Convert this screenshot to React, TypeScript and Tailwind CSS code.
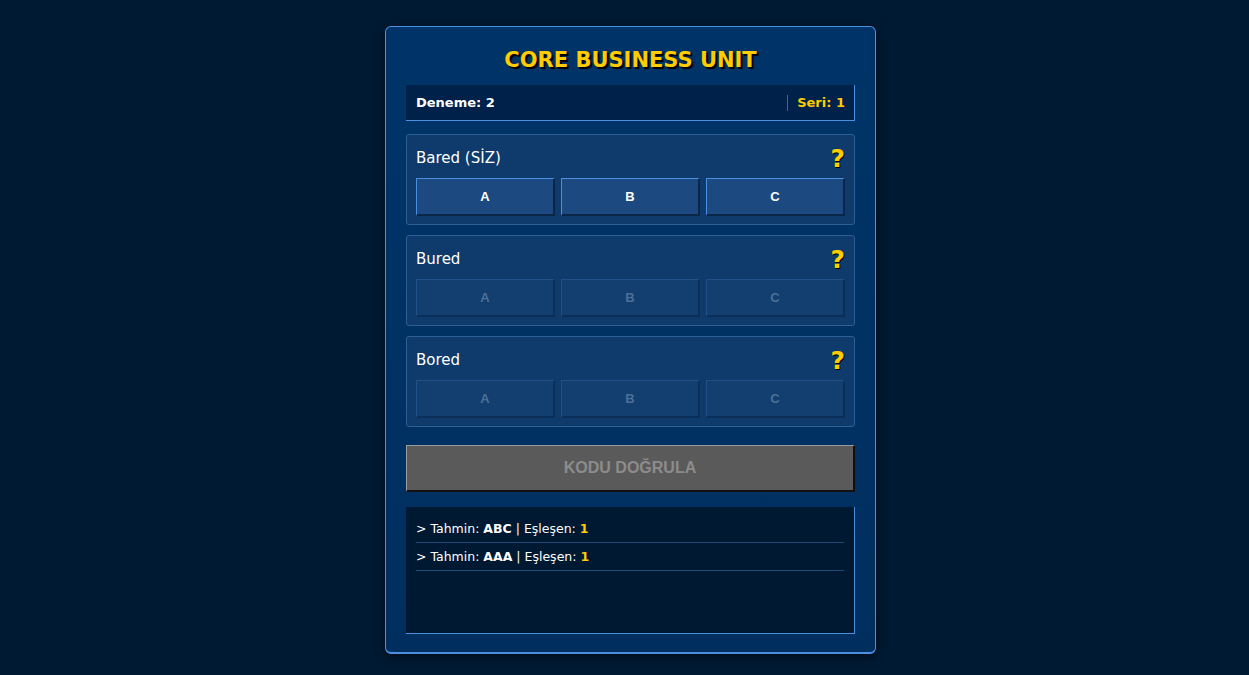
import React from 'react';

const rows = [
    { name: 'Bared (SİZ)', active: true },
    { name: 'Bured', active: false },
    { name: 'Bored', active: false },
];

const logs = [
    { guess: 'ABC', match: 1 },
    { guess: 'AAA', match: 1 },
];

function LetterButton({ letter, active }: { letter: string; active: boolean }) {
    if (active) {
        return (
            <button className="h-[38px] bg-[#1c4a80] border-2 border-t-[#4a90e2] border-l-[#4a90e2] border-r-[#0b2748] border-b-[#0b2748] border-t-[1px] border-l-[1px] font-['Liberation_Sans',Arial,sans-serif] text-white text-[13px] font-bold">
                {letter}
            </button>
        );
    }
    return (
        <button
            disabled
            className="h-[38px] bg-[#123e70] border-2 border-t-[#1f5088] border-l-[#1f5088] border-r-[#0c2f5a] border-b-[#0c2f5a] border-t-[1px] border-l-[1px] font-['Liberation_Sans',Arial,sans-serif] text-[#4c6f98] text-[13px] font-bold"
        >
            {letter}
        </button>
    );
}

export default function App(): React.JSX.Element {
    return (
        <div className="min-h-screen bg-[#001a33] pt-[26px] pl-[12px] font-['DejaVu_Sans',Verdana,sans-serif]">
            <div className="mx-auto w-[491px] rounded-[6px] border border-b-2 border-[#4a90e2] bg-gradient-to-b from-[#003468] to-[#002f5f] px-[20px] pt-[19px] pb-[18px] shadow-[0_2px_10px_rgba(0,0,0,0.6)]">
                {/* Title */}
                <h1 className="text-center text-[21px] leading-[28px] font-bold text-[#ffcc00] [text-shadow:2px_2px_1px_#000]">
                    CORE BUSINESS UNIT
                </h1>

                {/* Stats */}
                <div className="mt-[11px] flex items-center justify-between h-[36px] bg-[#00214a] border-r border-b border-[#4a90e2] pl-[10px] pr-[9px] text-[13px] font-bold">
                    <span className="text-white">Deneme: 2</span>
                    <span className="border-l border-[#2f6aa8] pl-[9px] text-[#ffcc00] leading-[16px]">Seri: 1</span>
                </div>

                {/* Rows */}
                <div className="mt-[13px] flex flex-col gap-[10px]">
                    {rows.map((row) => (
                        <div key={row.name} className="rounded-[3px] border border-[#2b5f96] bg-[#0e3a6c] px-[9px] pt-[10px] pb-[8px]">
                            <div className="flex h-[26px] items-center justify-between mb-[7px]">
                                <span className="text-[15px] text-white">{row.name}</span>
                                <span className="text-[25px] leading-none font-bold text-[#ffcc00] [text-shadow:1px_1px_0_#000]">?</span>
                            </div>
                            <div className="grid grid-cols-3 gap-[6px]">
                                {['A', 'B', 'C'].map((l) => (
                                    <LetterButton key={l} letter={l} active={row.active} />
                                ))}
                            </div>
                        </div>
                    ))}
                </div>

                {/* Submit */}
                <button
                    disabled
                    className="mt-[18px] w-full h-[47px] bg-[#5a5a5a] border-2 border-t-[#9c9c9c] border-l-[#9c9c9c] border-r-[#111] border-b-[#111] border-t-[1px] border-l-[1px] font-['Liberation_Sans',Arial,sans-serif] text-[16px] font-bold text-[#8c8c8c]"
                >
                    KODU DOĞRULA
                </button>

                {/* Log */}
                <div className="mt-[15px] h-[127px] bg-[#001932] border-r border-b border-[#4a90e2] px-[10px] pt-[8px]">
                    {logs.map((log, i) => (
                        <div key={i} className="border-b border-[#1f4a78] py-[5px] text-[12.5px] leading-[17px] text-white">
                            &gt; Tahmin: <b>{log.guess}</b> | Eşleşen: <b className="text-[#ffcc00]">{log.match}</b>
                        </div>
                    ))}
                </div>
            </div>
        </div>
    );
}
